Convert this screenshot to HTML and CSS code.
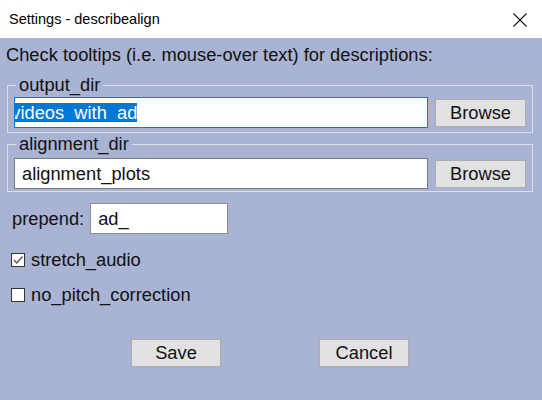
FILE: index.html
```html
<!DOCTYPE html>
<html lang="en">
<head>
<meta charset="utf-8">
<title>Settings - describealign</title>
<link rel="stylesheet" href="styles.css">
</head>
<body>
<div class="window">
  <header class="titlebar">
    <span class="title">Settings - describealign</span>
    <svg class="close" width="14" height="14" viewBox="0 0 14 14" aria-label="Close">
      <path d="M0.5 0.5 L13.5 13.5 M13.5 0.5 L0.5 13.5" stroke="#111" stroke-width="1.1" fill="none"/>
    </svg>
  </header>
  <main class="content">
    <p class="hint">Check tooltips (i.e. mouse-over text) for descriptions:</p>
    <fieldset class="group first">
      <legend>output_dir</legend>
      <div class="row">
        <div class="entry focused"><span class="sel">videos_with_ad</span></div>
        <button class="btn browse">Browse</button>
      </div>
    </fieldset>
    <fieldset class="group second">
      <legend>alignment_dir</legend>
      <div class="row">
        <div class="entry"><span class="val">alignment_plots</span></div>
        <button class="btn browse">Browse</button>
      </div>
    </fieldset>
    <div class="prepend">
      <span class="label">prepend:</span>
      <div class="entry short"><span class="val">ad_</span></div>
    </div>
    <div class="check first-check">
      <span class="box"><svg width="12" height="12" viewBox="0 0 12 12"><path d="M2 6 L4.8 9 L10.5 2.5" stroke="#555" stroke-width="1.3" fill="none"/></svg></span>
      <span>stretch_audio</span>
    </div>
    <div class="check">
      <span class="box"></span>
      <span>no_pitch_correction</span>
    </div>
    <div class="actions">
      <button class="btn action">Save</button>
      <button class="btn action">Cancel</button>
    </div>
  </main>
</div>
</body>
</html>
```

FILE: styles.css
```css
html, body {
  margin: 0;
  padding: 0;
}
body {
  width: 542px;
  height: 400px;
  overflow: hidden;
  background: #a9b4d4;
  font-family: "Liberation Sans", Arial, sans-serif;
  font-size: 18.3px;
  color: #111;
}
.titlebar {
  height: 38px;
  background: #fff;
  display: flex;
  align-items: center;
  justify-content: space-between;
  padding: 0 15px 0 9px;
  box-sizing: border-box;
}
.title {
  font-size: 14.5px;
  color: #000;
  margin-top: -1px;
}
.close {
  display: block;
  margin-top: 1px;
}
.content {
  padding: 6px 9px 0 7px;
}
.hint {
  margin: 0 0 0 -1px;
  line-height: 21px;
  white-space: nowrap;
}
.group {
  margin: 10px 0 0;
  border: 1px solid #dbe0ed;
  padding: 2px 6px 4px;
  min-width: 0;
}
.group.second {
  margin-top: 1px;
  padding: 4px 6px 2px;
}
.group legend {
  padding: 0 3px;
  margin-left: 2px;
  line-height: 20px;
}
.row {
  display: flex;
  align-items: center;
  gap: 7px;
}
.entry {
  flex: 1;
  height: 31px;
  box-sizing: border-box;
  background: #fff;
  border: 1px solid #7a7a7a;
  padding: 0 0 1px 7px;
  display: flex;
  align-items: center;
  overflow: hidden;
  white-space: nowrap;
}
.entry.focused {
  border-color: #0078d7;
}
.sel {
  background: #0078d7;
  color: #fff;
  line-height: 19px;
  margin-left: -10.7px;
  flex: none;
}
.val {
  line-height: 21px;
}
.btn {
  font-family: "Liberation Sans", Arial, sans-serif;
  font-size: 18.3px;
  color: #111;
  background: #e1e1e1;
  border: 1px solid #adadad;
  padding: 0;
  box-sizing: border-box;
}
.browse {
  width: 91px;
  height: 28px;
  flex: none;
}
.prepend {
  display: flex;
  align-items: center;
  gap: 6px;
  margin: 11px 0 0 5px;
}
.entry.short {
  flex: none;
  width: 138px;
  border-color: #8c8c8c;
}
.check {
  display: flex;
  align-items: center;
  gap: 6px;
  margin: 14px 0 0 4px;
  line-height: 21px;
}
.check.first-check {
  margin-top: 15px;
}
.box {
  width: 14px;
  height: 14px;
  box-sizing: border-box;
  border: 1px solid #333;
  background: #fff;
  display: flex;
  align-items: center;
  justify-content: center;
}
.box svg {
  display: block;
}
.actions {
  display: flex;
  justify-content: center;
  gap: 98px;
  margin: 34px 0 0;
}
.action {
  width: 90px;
  height: 28px;
}
```
